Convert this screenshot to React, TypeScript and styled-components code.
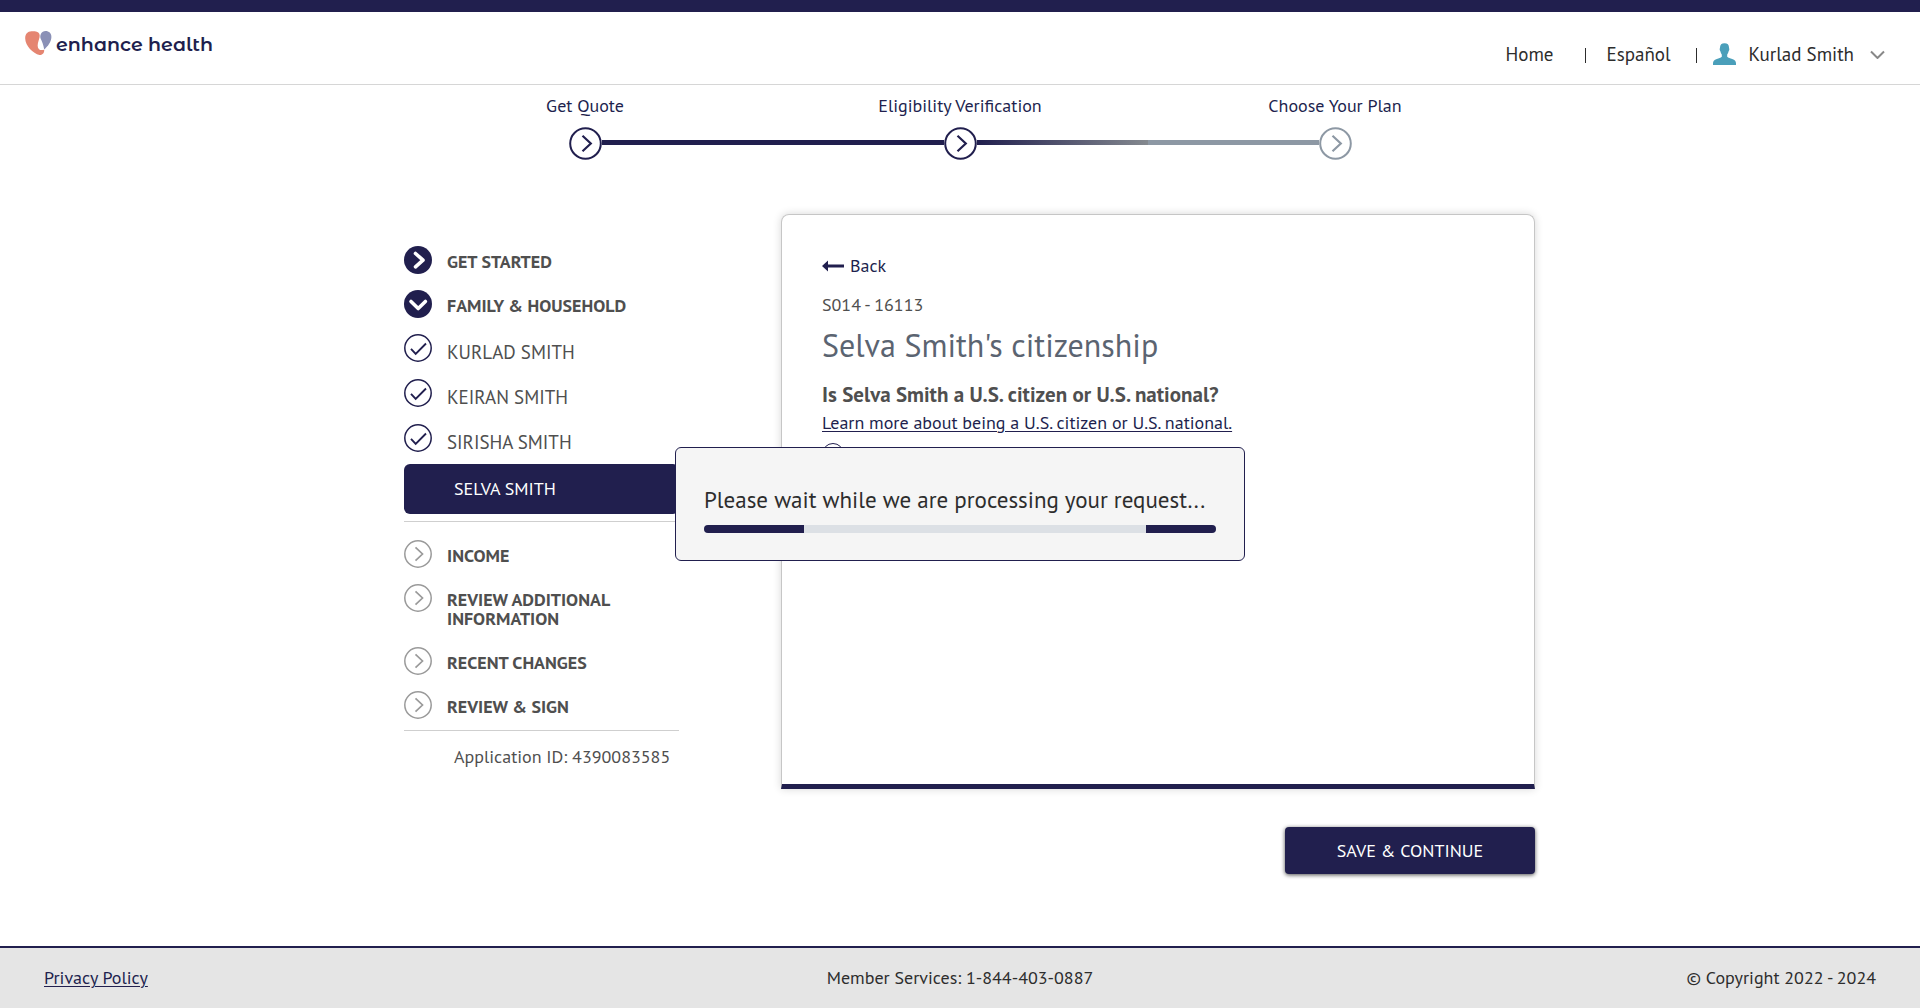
import React from "react";
import styled, { createGlobalStyle, css } from "styled-components";

const navy = "#211f4e";
const slate = "#8d98a4";
const ink = "#4f4f4f";
const dark = "#2d2d2d";
const sans = `"PT Sans", "Noto Sans", sans-serif`;

const GlobalStyle = createGlobalStyle`
  *, *::before, *::after { box-sizing: border-box; }
  body {
    margin: 0;
    background: #fff;
    color: ${ink};
    font-family: ${sans};
    font-size: 18px;
    line-height: 24px;
  }
  h1, h2, p, ul, ol { margin: 0; padding: 0; }
  ul, ol { list-style: none; }
  a { color: inherit; text-decoration: none; }
  button { font-family: inherit; cursor: pointer; }
  svg { display: block; flex: none; }
`;

const Page = styled.div`
  display: flex;
  flex-direction: column;
  min-height: 100vh;
  border-top: 12px solid ${navy};
`;

/* Header */

const Header = styled.header`
  display: flex;
  justify-content: space-between;
  align-items: flex-start;
  padding: 18px 35px 18px 25px;
  border-bottom: 1px solid #d6d6d6;
`;

const Brand = styled.a`
  display: flex;
  align-items: flex-start;
  gap: 4px;
  color: ${navy};
  font: 600 19px/30px "Montserrat Alternates", Inter, sans-serif;
`;

const Nav = styled.nav`
  display: flex;
  align-items: center;
  height: 36px;
  padding-top: 12px;
  color: ${dark};
  font-size: 19px;
`;

const Bar = styled.span<{ $before: number; $after: number }>`
  width: 1px;
  height: 15px;
  margin: 2px ${(p) => p.$after}px 0 ${(p) => p.$before}px;
  background: ${dark};
`;

const UserMenu = styled.button`
  display: flex;
  align-items: center;
  padding: 0;
  border: 0;
  background: none;
  color: inherit;
  font-size: inherit;
  line-height: 24px;
`;

const UserName = styled.span`
  margin: 0 16px 0 13px;
`;

/* Progress steps */

const Steps = styled.ol`
  display: grid;
  grid-template-columns: repeat(3, 1fr);
  width: 100%;
  max-width: 1125px;
  margin: 0 auto;
  padding-top: 10px;
  color: ${navy};
`;

const Step = styled.li`
  text-align: center;
  line-height: 22px;
`;

const Track = styled.div`
  display: flex;
  align-items: center;
  margin-top: 10px;
`;

const trackFill = {
  none: "transparent",
  done: navy,
  fading: `linear-gradient(90deg, ${navy}, #84898f)`,
  todo: slate,
};

const Line = styled.span<{ $fill: keyof typeof trackFill }>`
  flex: 1;
  height: 5px;
  margin-bottom: 2px;
  background: ${(p) => trackFill[p.$fill]};
`;

/* Body */

const Main = styled.main`
  display: grid;
  grid-template-columns: 275px minmax(0, 1fr);
  gap: 102px;
  width: 100%;
  max-width: 1150px;
  margin: 54px auto 72px;
  padding-left: 19px;
`;

const Sidebar = styled.aside`
  padding-top: 24px;
`;

const Group = styled.ul`
  padding-bottom: 7px;
  border-bottom: 1px solid #cfcfcf;
  & + & {
    padding: 10px 0 3px;
  }
`;

const Row = styled.a<{ $nested?: boolean }>`
  display: flex;
  align-items: flex-start;
  gap: 15px;
  padding: 8px 0 7px;
  font-weight: 700;
  line-height: 19px;
  ${(p) =>
    p.$nested &&
    css`
      padding-bottom: 8px;
      font-size: 19px;
      font-weight: 400;
    `}
`;

const RowText = styled.span<{ $nested?: boolean }>`
  max-width: 190px;
  padding: ${(p) => (p.$nested ? "9px 0 1px" : "6px 0 4px")};
`;

const ActiveRow = styled.a`
  display: block;
  margin-top: 3px;
  padding: 13px 50px;
  border-radius: 6px;
  background: ${navy};
  color: #fff;
`;

const ApplicationId = styled.p`
  padding: 14px 0 0 50px;
  white-space: nowrap;
`;

const Content = styled.div`
  display: flex;
  flex-direction: column;
  align-items: flex-end;
  gap: 38px;
`;

const Card = styled.section`
  width: 100%;
  min-height: 575px;
  padding: 39px 40px;
  border: 1px solid #c6c6c6;
  border-bottom: 5px solid ${navy};
  border-radius: 8px 8px 0 0;
  box-shadow: 0 0 8px rgba(0, 0, 0, 0.16);
`;

const Back = styled.a`
  display: inline-flex;
  align-items: center;
  gap: 6px;
  color: ${navy};
`;

const ScreenCode = styled.p`
  margin-top: 15px;
`;

const Title = styled.h1`
  margin-top: 8px;
  color: #5b6471;
  font-size: 32px;
  font-weight: 400;
  line-height: 40px;
`;

const Question = styled.h2`
  margin-top: 16px;
  font-size: 21px;
  font-weight: 700;
  line-height: 28px;
`;

const MoreLink = styled.a`
  display: inline-block;
  color: ${navy};
  line-height: 28px;
  text-decoration: underline;
  text-decoration-thickness: 1px;
  text-underline-offset: 2px;
`;

const Radio = styled.input`
  display: block;
  appearance: none;
  width: 22px;
  height: 22px;
  margin: 6px 0 0;
  border: 1px solid ${navy};
  border-radius: 50%;
`;

const Primary = styled.button`
  width: 250px;
  padding: 12px 0 11px;
  border: 0;
  border-radius: 4px;
  background: ${navy};
  box-shadow: 0 1px 4px rgba(0, 0, 0, 0.7);
  color: #fff;
  font-size: 18px;
  line-height: 24px;
`;

/* Footer */

const Footer = styled.footer`
  display: grid;
  grid-template-columns: 1fr auto 1fr;
  margin-top: auto;
  padding: 18px 44px;
  border-top: 2px solid ${navy};
  background: #e5e5e5;
  color: ${dark};
`;

const PolicyLink = styled.a`
  justify-self: start;
  color: ${navy};
  text-decoration: underline;
  text-decoration-thickness: 1px;
  text-underline-offset: 2px;
`;

const Copyright = styled.span`
  justify-self: end;
`;

/* Waiting dialog */

const Overlay = styled.div`
  position: fixed;
  inset: 0;
  display: grid;
  place-items: center;
`;

const Dialog = styled.div`
  width: 570px;
  padding: 37px 28px 27px;
  border: 1px solid ${navy};
  border-radius: 6px;
  background: #f5f5f5;
  color: ${dark};
  font-size: 23px;
  line-height: 30px;
`;

const Progress = styled.div`
  display: flex;
  justify-content: space-between;
  height: 8px;
  margin-top: 10px;
  border-radius: 4px;
  overflow: hidden;
  background: #dce0e5;
`;

const Chunk = styled.span<{ $width: number }>`
  width: ${(p) => p.$width}px;
  background: ${navy};
`;

/* Icons */

const Heart = () => (
  <svg width="27" height="26" viewBox="0 -1 27 26" aria-hidden="true">
    <path
      d="M6.5.3C10 .2 13.300.5 14.300 2.800 15.300 5 14.300 7.500 13.500 10c-1.100 3.600-1.300 6.600.5 8.300 1.500 1.300 3.300.700 5.200.500C19.500 22 17.500 24.300 14.500 24 8 22.500.3 15 .2 7.500.1 3 2.500.4 6.500.3Z"
      fill="#e58571"
    />
    <path
      d="M20.500.1C24 .1 26.500 2.300 26.400 6c-.1 4.800-3.500 9.200-7.200 12.600C18.400 14 17.200 11 15.600 7.600 14.500 4.500 16.500.1 20.500.1Z"
      fill="#8a90b6"
    />
  </svg>
);

const Person = () => (
  <svg width="23" height="22" viewBox="0 0 23 22" aria-hidden="true">
    <path
      d="M11.500 0.300c3 0 4.500 1.500 4.500 4.200 0 .8.400 1 .3 2-.1 1-.6 1.300-.8 2.200-.3 1.300-.8 2-1.300 2.800v2.300c1 1.200 3 1.400 5 2.100 2.800 1 3.800 2.200 3.800 4.600V22H0v-1.500c0-2.400 1-3.600 3.800-4.600 2-.7 4-.9 5-2.100v-2.300c-.5-.8-1-1.500-1.300-2.800-.2-.9-.7-1.200-.8-2.200-.1-1 .3-1.200.3-2C7 1.800 8.500.3 11.500.3Z"
      fill="#4a9fba"
    />
  </svg>
);

const Caret = () => (
  <svg width="15" height="10" viewBox="0 0 15 10" fill="none" aria-hidden="true">
    <path d="M1 2.500 7.500 9 14 2.500" stroke="#888" strokeWidth="2" />
  </svg>
);

const StepIcon = ({ color }: { color: string }) => (
  <svg width="33" height="33" viewBox="0 0 33 33" fill="none" stroke={color} aria-hidden="true">
    <circle cx="16.500" cy="16.500" r="15.300" strokeWidth="2" />
    <path d="m13.500 8.700 8.300 7.800-8.300 7.800" strokeWidth="2.200" />
  </svg>
);

type Mark = "done" | "open" | "check" | "todo";

const RowIcon = ({ mark }: { mark: Mark }) => {
  if (mark === "done" || mark === "open") {
    return (
      <svg width="28" height="28" viewBox="0 0 28 28" fill="none" aria-hidden="true">
        <circle cx="14" cy="14" r="14" fill={navy} />
        <path
          d={mark === "done" ? "m11.500 7.500 7.500 6.700-7.500 6.700" : "m7 11.500 7.200 7 7.200-7"}
          stroke="#fff"
          strokeWidth="3.600"
          strokeLinecap="round"
          strokeLinejoin="round"
        />
      </svg>
    );
  }
  if (mark === "check") {
    return (
      <svg width="28" height="28" viewBox="0 0 28 28" fill="none" stroke={navy} aria-hidden="true">
        <circle cx="14" cy="14" r="13.200" strokeWidth="1.500" />
        <path d="m7 14.800 4.700 5L22 9.500" strokeWidth="1.900" />
      </svg>
    );
  }
  return (
    <svg width="28" height="28" viewBox="0 0 28 28" fill="none" stroke="#9a9a9a" aria-hidden="true">
      <circle cx="14" cy="14" r="13.200" strokeWidth="1.500" />
      <path d="m11.500 7.300 7 6.700-7 6.700" strokeWidth="1.700" />
    </svg>
  );
};

const Arrow = () => (
  <svg width="22" height="12" viewBox="0 0 22 12" aria-hidden="true">
    <path d="M0 6 6 .5v4h16v3H6v4Z" fill={navy} />
  </svg>
);

const Item = ({ mark, nested, children }: { mark: Mark; nested?: boolean; children: string }) => (
  <li>
    <Row href="#" $nested={nested}>
      <RowIcon mark={mark} />
      <RowText $nested={nested}>{children}</RowText>
    </Row>
  </li>
);

export default function App() {
  return (
    <Page>
      <GlobalStyle />
      <Header>
        <Brand href="#">
          <Heart />
          enhance health
        </Brand>
        <Nav>
          <a href="#">Home</a>
          <Bar $before={31} $after={21} />
          <a href="#">Español</a>
          <Bar $before={25} $after={16} />
          <UserMenu type="button">
            <Person />
            <UserName>Kurlad Smith</UserName>
            <Caret />
          </UserMenu>
        </Nav>
      </Header>

      <Steps>
        <Step>
          Get Quote
          <Track>
            <Line $fill="none" />
            <StepIcon color={navy} />
            <Line $fill="done" />
          </Track>
        </Step>
        <Step>
          Eligibility Verification
          <Track>
            <Line $fill="done" />
            <StepIcon color={navy} />
            <Line $fill="fading" />
          </Track>
        </Step>
        <Step>
          Choose Your Plan
          <Track>
            <Line $fill="todo" />
            <StepIcon color={slate} />
            <Line $fill="none" />
          </Track>
        </Step>
      </Steps>

      <Main>
        <Sidebar>
          <Group>
            <Item mark="done">GET STARTED</Item>
            <Item mark="open">FAMILY &amp; HOUSEHOLD</Item>
            <Item mark="check" nested>KURLAD SMITH</Item>
            <Item mark="check" nested>KEIRAN SMITH</Item>
            <Item mark="check" nested>SIRISHA SMITH</Item>
            <li>
              <ActiveRow href="#" aria-current="page">SELVA SMITH</ActiveRow>
            </li>
          </Group>
          <Group>
            <Item mark="todo">INCOME</Item>
            <Item mark="todo">REVIEW ADDITIONAL INFORMATION</Item>
            <Item mark="todo">RECENT CHANGES</Item>
            <Item mark="todo">REVIEW &amp; SIGN</Item>
          </Group>
          <ApplicationId>Application ID: 4390083585</ApplicationId>
        </Sidebar>

        <Content>
          <Card>
            <Back href="#">
              <Arrow />
              Back
            </Back>
            <ScreenCode>S014 - 16113</ScreenCode>
            <Title>Selva Smith's citizenship</Title>
            <Question id="citizen-question">Is Selva Smith a U.S. citizen or U.S. national?</Question>
            <MoreLink href="#">Learn more about being a U.S. citizen or U.S. national.</MoreLink>
            <Radio type="radio" name="citizen" aria-labelledby="citizen-question" />
          </Card>
          <Primary type="button">SAVE &amp; CONTINUE</Primary>
        </Content>
      </Main>

      <Footer>
        <PolicyLink href="#">Privacy Policy</PolicyLink>
        <span>Member Services: 1-844-403-0887</span>
        <Copyright>© Copyright 2022 - 2024</Copyright>
      </Footer>

      <Overlay>
        <Dialog role="alertdialog" aria-labelledby="wait-text">
          <p id="wait-text">Please wait while we are processing your request...</p>
          <Progress>
            <Chunk $width={100} />
            <Chunk $width={70} />
          </Progress>
        </Dialog>
      </Overlay>
    </Page>
  );
}
